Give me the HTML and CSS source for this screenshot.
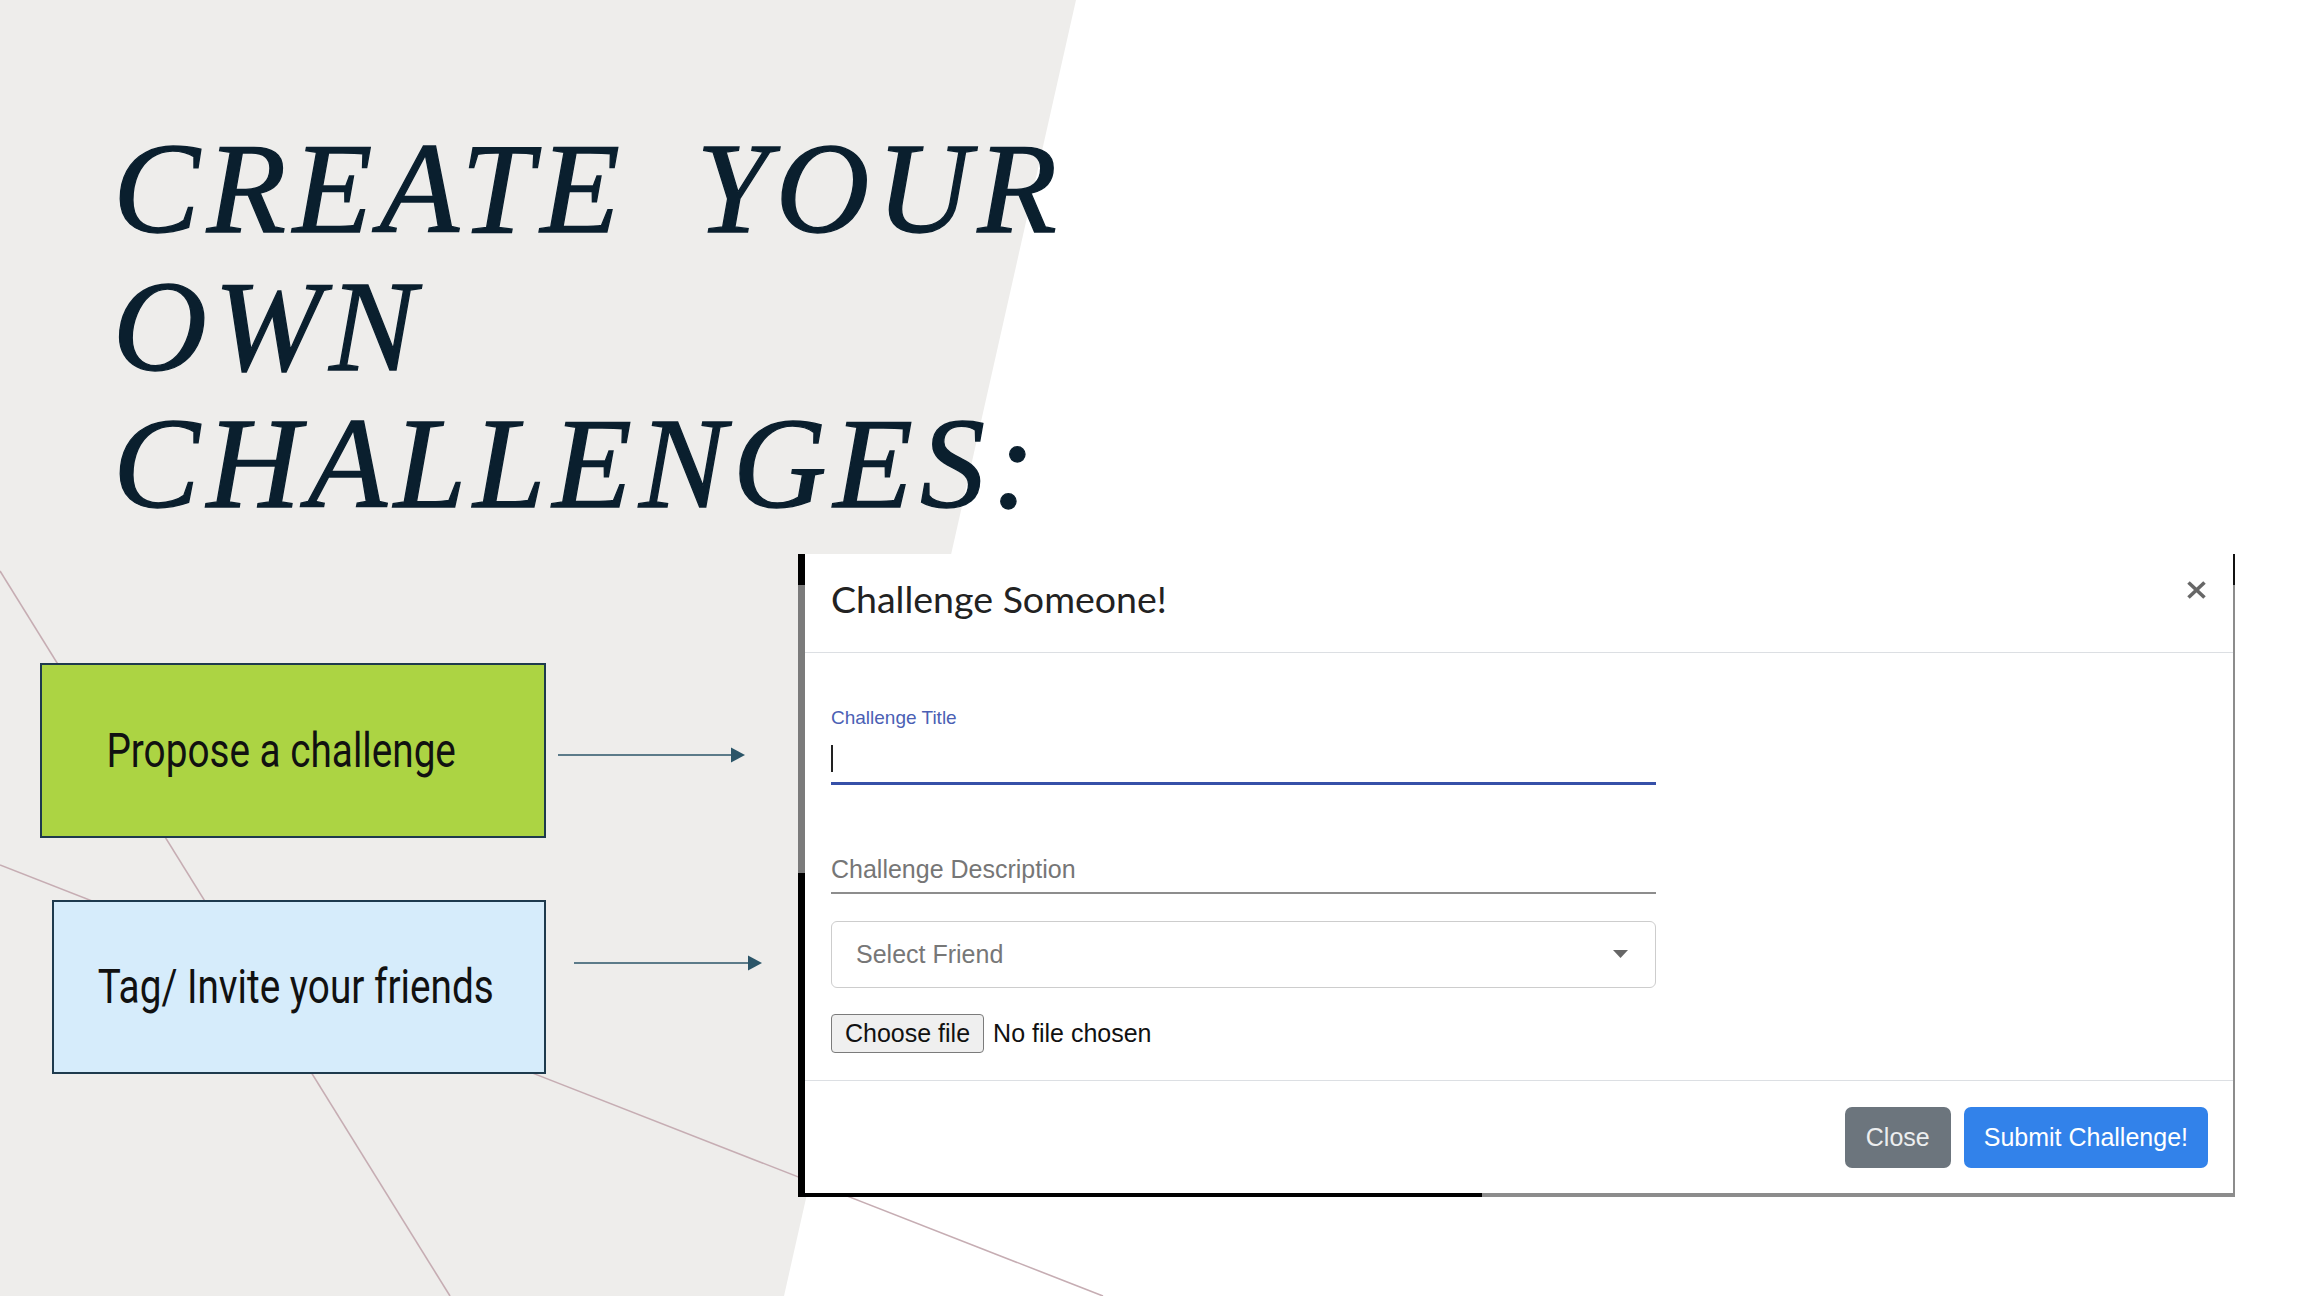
FILE: index.html
```html
<!doctype html>
<html lang="en">
  <head>
    <meta charset="utf-8" />
    <meta name="viewport" content="width=device-width, initial-scale=1">
    <title>Create Your Own Challenges</title>
    <link rel="stylesheet" href="styles.css">
  </head>

  <body>
    <main class="slide">
      <!-- slide backdrop: grey panel and the two thin guide lines -->
      <svg class="backdrop" viewBox="0 0 2312 1296" preserveAspectRatio="none" aria-hidden="true">
        <polygon points="0,0 1076,0 784,1296 0,1296" fill="#eeedeb"/>
        <line x1="0" y1="571" x2="450" y2="1296"/>
        <line x1="0" y1="865" x2="1103" y2="1296"/>
      </svg>

      <h1 class="headline">CREATE YOUR<br>OWN<br>CHALLENGES:</h1>

      <div class="stage">
        <div class="steps">
          <div class="step step_propose">
            <div class="step_box"><span>Propose a challenge</span></div>
            <svg class="arrow" width="187" height="16" viewBox="0 0 187 16" aria-hidden="true">
              <line x1="0" y1="8" x2="174" y2="8"/>
              <polygon points="173,0.5 187,8 173,15.5"/>
            </svg>
          </div>
          <div class="step step_invite">
            <div class="step_box"><span>Tag/ Invite your friends</span></div>
            <svg class="arrow" width="188" height="16" viewBox="0 0 188 16" aria-hidden="true">
              <line x1="0" y1="8" x2="175" y2="8"/>
              <polygon points="174,0.5 188,8 174,15.5"/>
            </svg>
          </div>
        </div>

        <section class="modal">
          <div class="modal_dialog">
            <div class="modal_header">
              <h2>Challenge Someone!</h2>
              <button class="close_x" aria-label="Close">
                <svg width="19" height="18" viewBox="0 0 19 18">
                  <line x1="1.5" y1="1.5" x2="17.5" y2="16.5"/>
                  <line x1="17.5" y1="1.5" x2="1.5" y2="16.5"/>
                </svg>
              </button>
            </div>

            <div class="modal_body">
              <div class="text_field is_focused">
                <label>Challenge Title</label>
                <div class="text_line"><span class="caret"></span></div>
              </div>
              <div class="text_field">
                <div class="text_line plain">Challenge Description</div>
              </div>
              <div class="select_box">
                <span>Select Friend</span>
                <svg width="15" height="8" viewBox="0 0 15 8" aria-hidden="true">
                  <polygon points="0,0 15,0 7.5,8"/>
                </svg>
              </div>
              <div class="file_row">
                <button class="file_btn">Choose file</button>
                <span>No file chosen</span>
              </div>
            </div>

            <div class="modal_footer">
              <button class="btn btn_close">Close</button>
              <button class="btn btn_submit">Submit Challenge!</button>
            </div>
          </div>
        </section>
      </div>
    </main>
  </body>
</html>
```

FILE: styles.css
```css
/* Page reset */
body{
  margin: 0;
  background: #fff;
}
/* The slide itself */
.slide{
  position: relative;
  width: 2312px;
  height: 1296px;
  overflow: hidden;
  padding: 120px 0 0 40px;
  box-sizing: border-box;
}
.backdrop{
  position: absolute;
  inset: 0;
  width: 100%;
  height: 100%;
  z-index: 0;
}
.backdrop line{
  stroke: #c6adb3;
  stroke-width: 1.6;
}
/* Big italic heading */
.headline{
  position: relative;
  z-index: 1;
  margin: 0 0 21px 73px;
  font-family: "Liberation Serif", serif;
  font-style: italic;
  font-weight: 400;
  font-size: 130px;
  line-height: 137.5px;
  letter-spacing: 7px;
  word-spacing: 30px;
  color: #0a1f2e;
  -webkit-text-stroke: 1.3px #0a1f2e;
}
/* Row with the steps and the dialog */
.stage{
  position: relative;
  z-index: 1;
  display: grid;
  grid-template-columns: 758px 1437px;
  align-items: start;
}
.steps{
  display: flex;
  flex-direction: column;
  gap: 62px;
  padding-top: 109px;
}
.step{
  display: flex;
  align-items: flex-start;
}
.step_box{
  display: flex;
  align-items: center;
  justify-content: center;
  box-sizing: border-box;
  border: 2px solid #1e3a4d;
  font-family: Roboto, "Liberation Sans", sans-serif;
  font-size: 49px;
  color: #111;
}
.step_box span{
  display: inline-block;
  white-space: nowrap;
  transform: scaleX(0.79);
}
.step_propose .step_box{
  width: 506px;
  height: 175px;
  background: #acd443;
  padding-right: 24px;
}
.step_invite .step_box{
  width: 494px;
  height: 174px;
  margin-left: 12px;
  padding-right: 6px;
  background: #d6ecfb;
}
.arrow line{
  stroke: #2b5568;
  stroke-width: 1.6;
}
.arrow polygon{
  fill: #2b5568;
}
.step_propose .arrow{
  margin: 84px 0 0 12px;
}
.step_invite .arrow{
  margin: 55px 0 0 28px;
}
/* Dialog with its dark screenshot edges */
.modal{
  padding: 0 2px 4px 7px;
  background:
    linear-gradient(to bottom, #000 0 31px, #7b7b7b 31px 319px, #000 319px) left top / 7px 100% no-repeat,
    linear-gradient(to right, #000 0 684px, #8c8c8c 684px) left bottom / 100% 4px no-repeat,
    linear-gradient(to bottom, #111 0 31px, #8c8c8c 31px) right top / 2px 100% no-repeat;
}
.modal_dialog{
  background: #fff;
  font-family: "Liberation Sans", Arial, sans-serif;
}
.modal_header{
  display: flex;
  justify-content: space-between;
  align-items: flex-start;
  box-sizing: border-box;
  height: 99px;
  padding: 22px 27px 0 26px;
  border-bottom: 1px solid #dcdfe3;
}
.modal_header h2{
  margin: 0;
  font-family: Lato, "Liberation Sans", sans-serif;
  font-weight: 400;
  font-size: 37.5px;
  line-height: 1.2;
  color: #222;
}
.close_x{
  margin-top: 5px;
  padding: 0;
  border: none;
  background: none;
  line-height: 0;
}
.close_x line{
  stroke: #676767;
  stroke-width: 3.6;
}
.modal_body{
  padding: 54px 0 27px 26px;
  width: 825px;
  font-size: 25px;
}
/* Material style text fields */
.text_field label{
  display: block;
  font-size: 19px;
  line-height: 21px;
  color: #4b5fb4;
}
.text_line{
  box-sizing: border-box;
  height: 57px;
  padding-top: 17px;
  border-bottom: 3px solid #3650a8;
}
.caret{
  display: block;
  width: 2px;
  height: 27px;
  background: #222;
}
.text_line.plain{
  height: auto;
  margin-top: 70px;
  padding: 0 0 8px 0;
  border-bottom: 2px solid #8d8d8d;
  color: #767676;
}
.select_box{
  display: flex;
  align-items: center;
  justify-content: space-between;
  box-sizing: border-box;
  height: 67px;
  margin-top: 27px;
  padding: 0 27px 0 24px;
  border: 1.5px solid #cdcdcd;
  border-radius: 6px;
  color: #777;
}
.select_box polygon{
  fill: #666;
}
.file_row{
  display: flex;
  align-items: center;
  gap: 9px;
  margin-top: 26px;
  color: #111;
}
.file_btn{
  box-sizing: border-box;
  height: 39px;
  padding: 0 13px;
  border: 1.5px solid #7b7b7b;
  border-radius: 4px;
  background: #efefef;
  font-family: "Liberation Sans", Arial, sans-serif;
  font-size: 25px;
  color: #111;
}
/* Footer buttons */
.modal_footer{
  display: flex;
  justify-content: flex-end;
  gap: 13px;
  padding: 26px 25px 25px;
  border-top: 1px solid #dcdfe3;
}
.btn{
  height: 61px;
  padding: 0 21px;
  border: none;
  border-radius: 7px;
  font-family: "Liberation Sans", Arial, sans-serif;
  font-size: 25px;
  color: #fff;
}
.btn_close{
  background: #6c757d;
  color: #eceeef;
}
.btn_submit{
  padding: 0 20px;
  background: #3282ea;
}
```
